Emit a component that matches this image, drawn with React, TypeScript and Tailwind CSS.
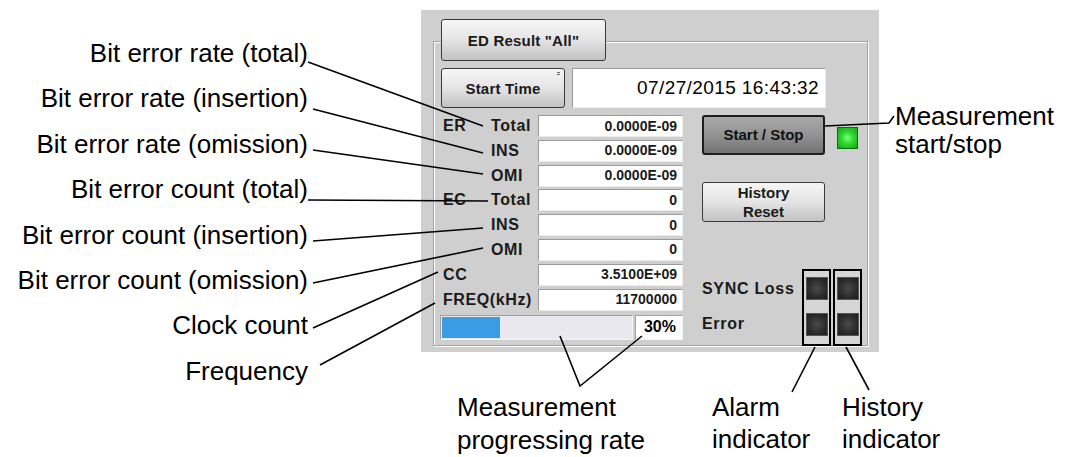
import React from "react";

const rows = [
  { l: "ER", r: "Total", v: "0.0000E-09" },
  { l: "", r: "INS", v: "0.0000E-09" },
  { l: "", r: "OMI", v: "0.0000E-09" },
  { l: "EC", r: "Total", v: "0" },
  { l: "", r: "INS", v: "0" },
  { l: "", r: "OMI", v: "0" },
  { l: "CC", r: "", v: "3.5100E+09" },
  { l: "FREQ(kHz)", r: "", v: "11700000" },
];

const leftNotes = [
  "Bit error rate (total)",
  "Bit error rate (insertion)",
  "Bit error rate (omission)",
  "Bit error count (total)",
  "Bit error count (insertion)",
  "Bit error count (omission)",
  "Clock count",
  "Frequency",
];

const lines: [number, number][][] = [
  [[308, 62], [483, 126]],
  [[313, 109], [483, 153]],
  [[313, 150], [483, 174]],
  [[308, 200], [488, 201]],
  [[313, 241], [483, 228]],
  [[313, 283], [483, 248]],
  [[313, 328], [438, 272]],
  [[320, 365], [435, 303]],
  [[560, 336], [580, 386], [642, 336]],
  [[825, 126], [889, 123], [894, 116]],
  [[815, 347], [792, 392]],
  [[846, 347], [869, 390]],
];

function Btn({ children, className = "" }: { children: React.ReactNode; className?: string }) {
  return (
    <div
      className={`flex items-center justify-center rounded-[3px] border border-[#3a3a3a] bg-gradient-to-b from-[#f6f6f6] via-[#e4e4e4] to-[#c2c2c2] text-[15px] font-bold leading-[19px] text-[#1a1a1a] text-center ${className}`}
    >
      {children}
    </div>
  );
}

function Square() {
  return (
    <div className="h-[23px] w-[22px] bg-[radial-gradient(circle,#4a4a4a_0%,#2c2c2c_60%,#1c1c1c_100%)] border border-[#555]" />
  );
}

export default function App() {
  return (
    <div className="relative flex h-[457px] w-[1069px] overflow-hidden bg-white font-['Liberation_Sans',Arial,sans-serif] text-black">
      {/* left annotations */}
      <div className="flex w-[308px] shrink-0 flex-col items-end pt-[31px] text-[26px]">
        {leftNotes.map((t) => (
          <div key={t} className="h-[45.4px] whitespace-nowrap leading-[45.4px]">
            {t}
          </div>
        ))}
      </div>

      {/* middle: panel + bottom annotations */}
      <div className="ml-[113px] flex w-[458px] shrink-0 flex-col pt-[10px]">
        <div className="flex h-[342px] w-[458px] flex-col bg-[#cfcfcf] pl-[12px] pr-[11px] pt-[9px]">
          <Btn className="relative z-10 ml-[8px] h-[42px] w-[165px] tracking-[0.2px]">ED Result "All"</Btn>
          <div className="-mt-[20px] flex h-[305px] flex-col border border-[#a4a4a4] pl-[7px] pt-[26px] shadow-[inset_1px_1px_0_#fff,1px_1px_0_#fff]">
            {/* start time row */}
            <div className="flex">
              <Btn className="relative h-[40px] w-[124px] tracking-[0.2px]">
                Start Time
                <span className="absolute right-[4px] top-[3px] flex flex-col gap-[1px]">
                  <span className="h-[1px] w-[3px] bg-[#666]" />
                  <span className="h-[1px] w-[3px] bg-[#666]" />
                </span>
              </Btn>
              <div className="ml-[7px] flex h-[40px] w-[254px] items-center justify-end border border-[#9a9a9a] border-b-[#ececec] border-r-[#ececec] bg-white pr-[6px] text-[19px] tracking-[0.4px]">
                07/27/2015 16:43:32
              </div>
            </div>

            <div className="mt-[7px] flex">
              {/* left values */}
              <div className="-ml-px flex w-[243px] flex-col">
                <div className="flex flex-col gap-[2.8px]">
                  {rows.map((r, i) => (
                    <div key={i} className="flex h-[22px] items-center">
                      <div className="flex w-[98px] items-center whitespace-nowrap text-[16px] font-bold tracking-[0.6px] text-[#1a1a1a]">
                        <span className="min-w-[51px] pl-[3px]">{r.l}</span>
                        <span>{r.r}</span>
                      </div>
                      <div className="flex h-[22px] w-[145px] items-center justify-end border border-[#9a9a9a] border-b-[#ececec] border-r-[#ececec] bg-white pr-[5px] text-[14px] font-bold text-[#1a1a1a]">
                        {r.v}
                      </div>
                    </div>
                  ))}
                </div>
                <div className="mt-[4.4px] flex h-[25px] items-stretch gap-[2px]">
                  <div className="flex w-[193px] border border-[#a0a0a0] border-b-[#f4f4f4] border-r-[#f4f4f4] bg-[#e8e8ee] p-[1px]">
                    <div className="w-[58px] bg-[#3b9ce6]" />
                  </div>
                  <div className="flex w-[48px] items-center justify-end border border-[#a0a0a0] border-b-[#f4f4f4] border-r-[#f4f4f4] bg-white pr-[6px] text-[16px] font-bold">
                    30%
                  </div>
                </div>
              </div>

              {/* right controls */}
              <div className="ml-[19px] flex flex-col">
                <div className="flex items-center">
                  <div className="flex h-[40px] w-[123px] items-center justify-center rounded-[3px] border-2 border-[#1e1e1e] bg-gradient-to-b from-[#a9a9a9] via-[#939393] to-[#727272] text-[15px] font-bold text-[#111]">
                    Start / Stop
                  </div>
                  <div className="ml-[12px] mt-[6px] h-[22px] w-[21px] border border-[#0b6e0b] bg-[radial-gradient(circle,#7dff7d_0%,#2fd62f_45%,#12a812_100%)]" />
                </div>
                <Btn className="mt-[27px] h-[40px] w-[123px]">
                  <span>
                    History
                    <br />
                    Reset
                  </span>
                </Btn>
                <div className="mt-[47px] flex">
                  <div className="flex w-[100px] flex-col text-[16px] font-bold tracking-[0.7px] text-[#1a1a1a]">
                    <div className="mt-[9px] h-[22px] leading-[22px] whitespace-nowrap">SYNC Loss</div>
                    <div className="mt-[13px] h-[22px] leading-[22px]">Error</div>
                  </div>
                  <div className="flex gap-[2px]">
                    {[0, 1].map((k) => (
                      <div
                        key={k}
                        className="flex h-[77px] w-[29px] flex-col items-center border-2 border-black bg-[#d6d6d6] pt-[6px]"
                      >
                        <Square />
                        <div className="mt-[13px]">
                          <Square />
                        </div>
                      </div>
                    ))}
                  </div>
                </div>
              </div>
            </div>
          </div>
        </div>

        {/* bottom annotations */}
        <div className="mt-[39.5px] flex text-[26px] whitespace-nowrap">
          <div className="ml-[36px] w-[255px] shrink-0 leading-[33px]">
            Measurement
            <br />
            progressing rate
          </div>
          <div className="w-[130px] shrink-0 leading-[32px]">
            Alarm
            <br />
            indicator
          </div>
          <div className="shrink-0 leading-[32px]">
            History
            <br />
            indicator
          </div>
        </div>
      </div>

      {/* right annotation */}
      <div className="ml-[16px] pt-[102px] text-[26px] leading-[28px] whitespace-nowrap">
        Measurement
        <br />
        start/stop
      </div>

      {/* leader lines */}
      <svg className="pointer-events-none absolute left-0 top-0 z-20" width="1069" height="457">
        {lines.map((pts, i) => (
          <polyline
            key={i}
            points={pts.map((p) => p.join(",")).join(" ")}
            fill="none"
            stroke="#000"
            strokeWidth="1.6"
          />
        ))}
      </svg>
    </div>
  );
}
